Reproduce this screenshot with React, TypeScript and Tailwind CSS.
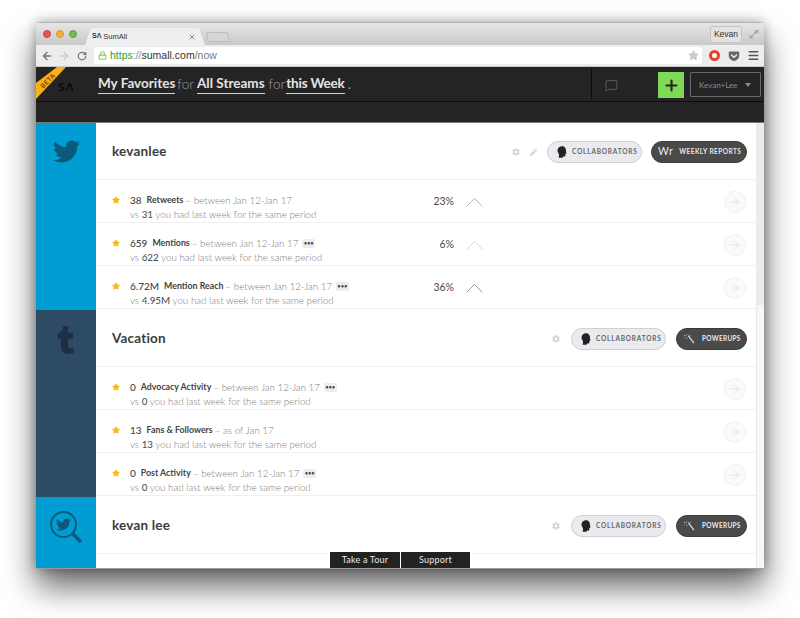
import { FaTwitter, FaTumblr, FaCog, FaPen, FaStar, FaGetPocket } from 'react-icons/fa';
import { ArrowLeft, ArrowRight, RotateCw, Lock, Star, Menu, MessageSquare, Plus, X } from 'lucide-react';

type Metric = {
  value: string;
  label: string;
  range: string;
  prev: string;
  more?: boolean;
  pct?: string;
  chevron?: string;
};

const streams: { sidebar: string; title: string; icon: string; edit?: boolean; second: string; metrics: Metric[] }[] = [
  {
    sidebar: 'bg-[#009dd3]',
    title: 'kevanlee',
    icon: 'twitter',
    edit: true,
    second: 'reports',
    metrics: [
      { value: '38', label: 'Retweets', range: 'between Jan 12-Jan 17', prev: '31', pct: '23%', chevron: 'text-[#b5b5b5]' },
      { value: '659', label: 'Mentions', range: 'between Jan 12-Jan 17', prev: '622', more: true, pct: '6%', chevron: 'text-[#d8d8d8]' },
      { value: '6.72M', label: 'Mention Reach', range: 'between Jan 12-Jan 17', prev: '4.95M', more: true, pct: '36%', chevron: 'text-[#999]' },
    ],
  },
  {
    sidebar: 'bg-[#2e4b66]',
    title: 'Vacation',
    icon: 'tumblr',
    second: 'powerups',
    metrics: [
      { value: '0', label: 'Advocacy Activity', range: 'between Jan 12-Jan 17', prev: '0', more: true },
      { value: '13', label: 'Fans & Followers', range: 'as of Jan 17', prev: '13' },
      { value: '0', label: 'Post Activity', range: 'between Jan 12-Jan 17', prev: '0', more: true },
    ],
  },
];

function HeadIcon() {
  return (
    <svg width="10" height="12" viewBox="0 0 12 14" className="text-[#222]">
      <path
        fill="currentColor"
        d="M6.2 0C2.8 0 .6 2.300.6 5.200c0 1.700.8 2.800 1.500 3.800.5.800.5 1.500.3 2.300L2 14h4.800l.3-1.600h1.700c.8 0 1.200-.5 1.200-1.200V9.500l1-.3c.4-.2.4-.5.2-.8L10.900 7c.2-3.800-1.300-7-4.700-7z"
      />
    </svg>
  );
}

function WandIcon() {
  return (
    <svg width="12" height="10" viewBox="0 0 14 12" className="text-[#e4e4e4]">
      <path d="M6 2l7 9" stroke="currentColor" strokeWidth="1.400" />
      <path d="M1 2h1.500M4 .5v1M4.500 5v1M1.500 4.500h.8M8 1.500h1" stroke="currentColor" strokeWidth="1" />
    </svg>
  );
}

function SearchBird() {
  return (
    <div className="relative w-[34px] h-[34px]">
      <svg width="34" height="34" viewBox="0 0 34 34" className="text-[#0b5a7c]">
        <circle cx="14.500" cy="14.500" r="12.500" fill="none" stroke="currentColor" strokeWidth="2" />
        <path d="M24 24l7 7" stroke="currentColor" strokeWidth="3.600" strokeLinecap="round" />
      </svg>
      <FaTwitter className="absolute left-[7px] top-[7px] text-[#0b5a7c]" size={15} />
    </div>
  );
}

function StreamIcon({ name }: { name: string }) {
  if (name === 'twitter') return <FaTwitter className="text-[#0b5a7c] ml-[1px]" size={27} />;
  if (name === 'tumblr') return <FaTumblr className="text-[#1c2f43] mt-[1px]" size={28} />;
  return <SearchBird />;
}

function CollabPill() {
  return (
    <div className="h-[22px] w-[95px] flex items-center pl-[9px] gap-[5px] rounded-full bg-[#eaeaef] border border-[#cfcfd4]">
      <HeadIcon />
      <span className="text-[6.500px] font-bold tracking-[0.8px] text-[#666] whitespace-nowrap">COLLABORATORS</span>
    </div>
  );
}

function DarkPill({ kind }: { kind: string }) {
  if (kind === 'reports') {
    return (
      <div className="h-[22px] w-[96px] ml-[9px] flex items-center pl-[6px] gap-[6px] rounded-full bg-[#4a4a4a] border border-[#3a3a3a] text-[#e8e8e8]">
        <span className="text-[10.500px] tracking-[0.5px]">Wr</span>
        <span className="text-[6.500px] font-bold tracking-[0.45px] whitespace-nowrap">WEEKLY REPORTS</span>
      </div>
    );
  }
  return (
    <div className="h-[22px] w-[71px] ml-[10px] flex items-center pl-[6px] gap-[7px] rounded-full bg-[#4a4a4a] border border-[#3a3a3a] text-[#e8e8e8]">
      <WandIcon />
      <span className="text-[6.500px] font-bold tracking-[0.3px] whitespace-nowrap">POWERUPS</span>
    </div>
  );
}

function StreamHeader({ title, edit, second }: { title: string; edit?: boolean; second: string }) {
  return (
    <div className="h-[57px] flex items-center pl-4 pr-[9px] border-b border-[#f0f0f0]">
      <h2 className="flex-1 text-[13.500px] font-bold tracking-[0.2px] text-[#3c3c3c]">{title}</h2>
      <div className="flex items-center mt-[2px]">
        <FaCog className="text-[#d5d5d5] mr-[1px]" size={8} />
        {edit && <FaPen className="text-[#d8d8d8] ml-[9px]" size={7} />}
        <div className="ml-[10px]">
          <CollabPill />
        </div>
        <DarkPill kind={second} />
      </div>
    </div>
  );
}

function MetricRow({ m }: { m: Metric }) {
  return (
    <div className="h-[43px] pt-[2px] flex items-center pl-4 pr-[10px] border-b border-[#f0f0f0]">
      <FaStar className="text-[#fdb813] mr-[10px] shrink-0 -mt-[4px]" size={8} />
      <div className="w-[295px] pt-[10px] font-light text-[#7d7d7d] text-[9.800px] leading-[14px]">
        <div className="flex items-center whitespace-nowrap">
          <span className="text-[#444] font-medium text-[10px] mr-[5px]">{m.value}</span>
          <span className="text-[#444] font-bold text-[8.800px] mr-[2px]">{m.label}</span>
          <span>– {m.range}</span>
          {m.more && (
            <span className="ml-[4px] h-[9px] w-[13px] rounded-[2px] bg-[#ececf1] text-[#444] text-[5px] tracking-[0.4px] leading-[9px] font-bold text-center">
              •••
            </span>
          )}
        </div>
        <div className="whitespace-nowrap">
          vs <span className="text-[#555] font-medium">{m.prev}</span> you had last week for the same period
        </div>
      </div>
      <div className="w-[29px] text-right text-[10.500px] text-[#4a4a4a]">{m.pct}</div>
      <div className="w-[17px] ml-[12px]">
        {m.chevron && (
          <svg width="17" height="10" viewBox="0 0 17 10" className={m.chevron}>
            <path d="M.5 9.500 8.500 1.500l8 8" fill="none" stroke="currentColor" strokeWidth="1" />
          </svg>
        )}
      </div>
      <div className="flex-1 flex justify-end">
        <div className="w-[22px] h-[22px] rounded-full bg-[#fafafa] border border-[#f1f1f1] flex items-center justify-center">
          <ArrowRight className="text-[#d4d4d4]" size={12} strokeWidth={1.200} />
        </div>
      </div>
    </div>
  );
}

function BrowserChrome() {
  return (
    <>
      <div className="h-[23px] bg-gradient-to-b from-[#e6e6e6] to-[#c9c9c9] border-t border-[#b5b5b5] flex items-end relative">
        <div className="flex gap-[5px] absolute left-[7px] top-[7px]">
          <span className="w-2 h-2 rounded-full bg-[#e8554e] border border-[#c6433d]" />
          <span className="w-2 h-2 rounded-full bg-[#efb13a] border border-[#cf9430]" />
          <span className="w-2 h-2 rounded-full bg-[#6fbe50] border border-[#57a23d]" />
        </div>
        <div className="ml-[49px] h-[17px] w-[120px] bg-[#efefef] [clip-path:polygon(0_100%,6px_0,calc(100%-6px)_0,100%_100%)] flex items-center pl-[7px] pr-[6px] text-[7.500px] text-[#333] font-['Liberation_Sans',sans-serif]">
          <span className="font-bold text-[7px] mr-[2px]">SΛ</span>
          <span className="flex-1">SumAll</span>
          <X size={8} className="text-[#777] mr-[3px]" strokeWidth={2.500} />
        </div>
        <div className="ml-[2px] mb-[3px] h-[10px] w-[22px] bg-[#d6d6d6] border border-[#bcbcbc] rounded-[2px] skew-x-12" />
        <div className="absolute left-[674px] top-[3px] w-[32px] h-[17px] bg-[#e2e2e2] border border-[#c4c4c4] rounded-[2px] text-[8.500px] text-[#333] text-center leading-[15px] font-['Liberation_Sans',sans-serif]">
          Kevan
        </div>
        <svg width="10" height="10" viewBox="0 0 10 10" className="absolute left-[713px] top-[6px] text-[#a9a9a9]">
          <path fill="currentColor" d="M5.500 1H9.500V5L8 3.500 6 5.500 4.500 4 6.500 2zM.500 5.500 2 7l2-2 1 1-2 2 1.500 1.500H.500z" />
        </svg>
      </div>
      <div className="h-[22px] bg-[#ededed] flex items-center border-b border-[#c8c8c8] font-['Liberation_Sans',sans-serif]">
        <ArrowLeft size={12} strokeWidth={3} className="ml-[5px] text-[#777]" />
        <ArrowRight size={12} strokeWidth={3} className="ml-[5px] text-[#cfcfcf]" />
        <RotateCw size={10} strokeWidth={3} className="ml-[7px] text-[#777]" />
        <div className="ml-[7px] w-[608px] h-[17px] bg-white rounded-[2px] flex items-center pl-[4px] pr-[3px] text-[10.500px]">
          <Lock size={9} strokeWidth={3} className="text-[#8fca5f] mr-[3px]" />
          <span className="text-[#2e9e34]">https</span>
          <span className="text-[#888]">://</span>
          <span className="text-[#333]">sumall.com</span>
          <span className="text-[#777] flex-1">/now</span>
          <Star size={11} className="text-[#ccc] fill-[#ccc]" />
        </div>
        <span className="ml-[7px] w-[11px] h-[11px] rounded-full border-[3px] border-[#e8412f] bg-white" />
        <FaGetPocket size={12} className="ml-[8px] text-[#666]" />
        <Menu size={13} strokeWidth={2.500} className="ml-[7px] text-[#555]" />
      </div>
    </>
  );
}

function AppHeader() {
  return (
    <div className="bg-[#242424] relative">
      <div className="h-[35px] flex items-center border-b border-[#0d0d0d]">
        <div className="w-[62px] shrink-0 text-[#0a0a0a] text-[12px] font-bold pl-[22px] pt-[5px] tracking-[1px]">SΛ</div>
        <div className="flex items-center text-[13.500px] text-[#a0a0a0] mt-[1px]">
          <span className="text-[#e4e4e4] font-bold border-b border-[#d5d5d5] pb-[1px] leading-[17px]">My Favorites</span>
          <span className="ml-[2px] mr-[3px] font-light">for</span>
          <span className="text-[#e4e4e4] font-bold border-b border-[#d5d5d5] pb-[1px] leading-[17px]">All Streams</span>
          <span className="ml-[4px] mr-[1px] font-light">for</span>
          <span className="text-[#e4e4e4] font-bold tracking-[-0.2px] border-b border-[#d5d5d5] pb-[1px] leading-[17px]">this Week</span>
          <span className="ml-[3px]">.</span>
        </div>
        <div className="absolute left-[555px] top-[2px] h-[31px] w-px bg-[#0d0d0d]" />
        <MessageSquare size={13} strokeWidth={1} className="absolute left-[569px] top-[12px] text-[#8a8a8a]" />
        <div className="absolute left-[622px] top-[5px] w-[26px] h-[26px] bg-[#7ed957] flex items-center justify-center">
          <Plus size={17} strokeWidth={3} className="text-[#1f2a1a]" />
        </div>
        <div className="absolute left-[654px] top-[5px] w-[71px] h-[25px] border border-[#6a6a6a] rounded-[1px] flex items-center pl-[8px] text-[8px] text-[#8a8a8a]">
          <span className="flex-1">Kevan+Lee</span>
          <span className="w-0 h-0 mr-[9px] border-x-[3.500px] border-x-transparent border-t-[4px] border-t-[#8a8a8a]" />
        </div>
      </div>
      <div className="h-[21px] border-b border-[#777]" />
      <div className="absolute left-0 top-0 w-[30px] h-[32px] overflow-hidden">
        <svg width="30" height="32" viewBox="0 0 30 32">
          <polygon points="21,0 30,0 0,32 0,16" fill="#fbb017" />
        </svg>
        <span className="absolute left-[3px] top-[9px] -rotate-45 text-[6.500px] font-bold tracking-[0.5px] text-[#6a4a00]">BETA</span>
      </div>
    </div>
  );
}

export default function App() {
  return (
    <div className="w-[800px] h-[618px] bg-white pt-[22px] pl-[36px] overflow-hidden font-['Lato',sans-serif]">
      <div className="w-[728px] h-[547px] relative rounded-t-[4px] overflow-hidden shadow-[0_18px_32px_rgba(0,0,0,0.6),0_0_12px_rgba(0,0,0,0.3)] bg-white flex flex-col border-b border-[#9a9a9a]">
        <BrowserChrome />
        <AppHeader />
        <div className="flex-1 overflow-hidden flex">
          <div className="flex-1 border-r border-[#e9e9e9]">
            {streams.map((s) => (
              <div key={s.title} className="flex h-[187px]">
                <div className={`w-[60px] shrink-0 ${s.sidebar} flex justify-center pt-[15px]`}>
                  <StreamIcon name={s.icon} />
                </div>
                <div className="flex-1">
                  <StreamHeader title={s.title} edit={s.edit} second={s.second} />
                  {s.metrics.map((m) => (
                    <MetricRow key={m.label} m={m} />
                  ))}
                </div>
              </div>
            ))}
            <div className="flex h-[80px]">
              <div className="w-[60px] shrink-0 bg-[#009dd3] flex justify-center pt-[13px]">
                <StreamIcon name="search" />
              </div>
              <div className="flex-1">
                <StreamHeader title="kevan lee" second="powerups" />
              </div>
            </div>
          </div>
          <div className="w-[7px] bg-[#f7f7f7]">
            <div className="h-[182px] bg-[#ececec]" />
          </div>
        </div>
        <div className="absolute left-[294px] bottom-0 h-[16px] flex gap-px text-[9px] text-[#e8e8e8] tracking-[0.2px]">
          <div className="w-[70px] bg-[#222] text-center leading-[16px]">Take a Tour</div>
          <div className="w-[69px] bg-[#222] text-center leading-[16px]">Support</div>
        </div>
      </div>
    </div>
  );
}
